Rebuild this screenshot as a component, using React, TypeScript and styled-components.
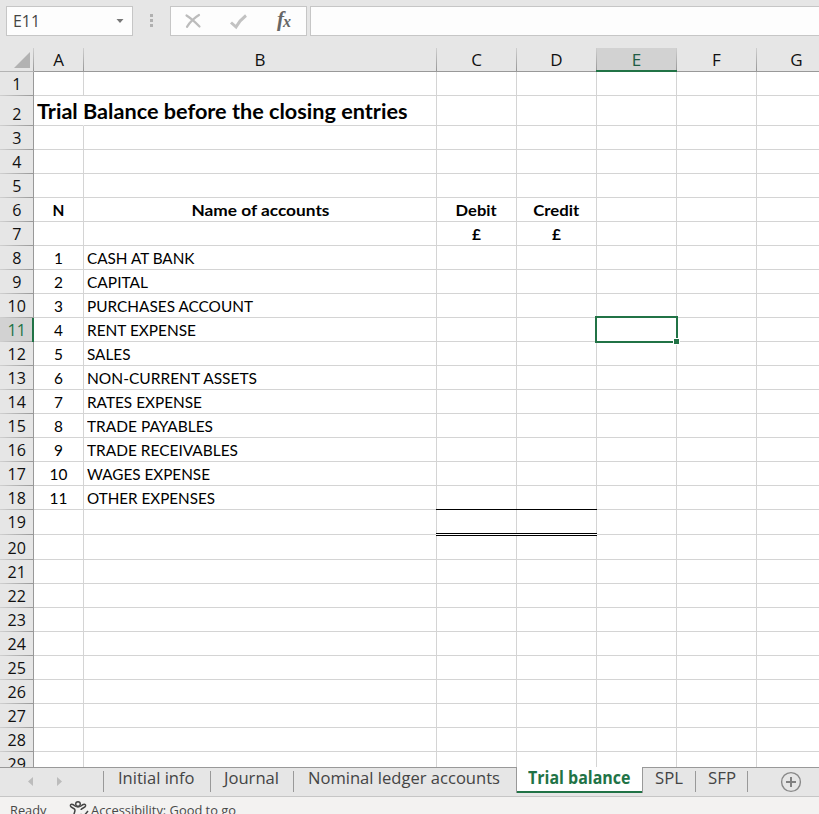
import React, { useLayoutEffect, useRef } from "react";
import styled, { createGlobalStyle, css } from "styled-components";

const GlobalStyle = createGlobalStyle`
  *, *::before, *::after { box-sizing: border-box; }
  html, body { margin: 0; padding: 0; overflow: hidden; background: #e6e6e6; }
`;

const UI_FONT = `"Open Sans", "Noto Sans", sans-serif`;
const CELL_FONT = `Lato, "Liberation Sans", sans-serif`;

const Window = styled.div`
  width: 819px;
  height: 814px;
  display: flex;
  flex-direction: column;
  overflow: hidden;
  background: #e6e6e6;
  font-family: ${UI_FONT};
  color: #000;
`;

const FittedText = styled.span`
  display: inline-block;
  flex: none;
  white-space: pre;
`;

/* Text stretched horizontally so that it takes a given width. */
function Fit({ w, origin = "left", children }: { w: number; origin?: "left" | "center"; children: string }) {
  const ref = useRef<HTMLSpanElement>(null);
  useLayoutEffect(() => {
    const el = ref.current;
    if (!el) return;
    el.style.transform = "none";
    const natural = el.getBoundingClientRect().width;
    el.style.transformOrigin = `${origin} center`;
    el.style.transform = `scaleX(${w / natural})`;
  }, [w, origin, children]);
  return <FittedText ref={ref}>{children}</FittedText>;
}

/* ---------- formula bar ---------- */

const FormulaBar = styled.div`
  height: 48px;
  flex: none;
  display: flex;
  align-items: flex-start;
  padding: 6px 0 0 6px;
`;

const Box = styled.div`
  height: 30px;
  border: 1px solid #c6c6c6;
  background: #fdfdfd;
  display: flex;
  align-items: center;
  flex: none;
`;

const NameBox = styled(Box)`
  width: 127px;
  padding: 0 8px 1px 6px;
  justify-content: space-between;
  font-size: 15.5px;
  color: #444;
`;

const Grip = styled.div`
  width: 37px;
  height: 30px;
  display: flex;
  flex-direction: column;
  align-items: center;
  justify-content: center;
  gap: 2px;
  padding-bottom: 1px;
`;

const GripDot = styled.i`
  width: 3px;
  height: 3px;
  background: #b0b0b0;
`;

const ActionsBox = styled(Box)`
  width: 137px;
  margin-right: 3px;
`;

const FunctionLabel = styled.text`
  font-family: "Liberation Serif", serif;
  font-style: italic;
  font-weight: 700;
  fill: #666;
`;

const FormulaInput = styled(Box)`
  flex: 1;
  border-right: 0;
`;

/* ---------- grid ---------- */

const Sheet = styled.div`
  height: 719px;
  flex: none;
  overflow: hidden;
  background: #fff;
`;

const Row = styled.div<{ $h: number }>`
  display: grid;
  grid-template-columns: 34px 50px 353px 80px 80px 80px 80px 80px;
  height: ${(p) => p.$h}px;
  width: 837px;
`;

const ColumnHead = styled.div<{ $active?: boolean }>`
  position: relative;
  display: flex;
  justify-content: center;
  padding: 1px 1px 0 0;
  font-size: 17px;
  line-height: 22px;
  color: ${(p) => (p.$active ? "#215c44" : "#111")};
  background:
    linear-gradient(to bottom, #cfcfcf, #979797) right / 1px 100% no-repeat,
    ${(p) => (p.$active ? "#d2d2d2" : "#e6e6e6")};
  border-bottom: 1px solid #999;
  ${(p) =>
    p.$active &&
    css`
      &::after {
        content: "";
        position: absolute;
        left: -1px;
        right: 0;
        bottom: -1px;
        height: 2px;
        background: #217346;
      }
    `}
`;

const Corner = styled(ColumnHead)`
  justify-content: flex-end;
  padding: 4px 4px 0 0;
  border-bottom-color: #b4b4b4;
`;

const RowHead = styled.div<{ $active?: boolean; $lift: number }>`
  display: flex;
  align-items: flex-end;
  justify-content: center;
  font-size: 17px;
  line-height: 23px;
  overflow: hidden;
  color: ${(p) => (p.$active ? "#217346" : "#111")};
  background:
    linear-gradient(to right, #d0d0d0, #999) bottom / 100% 1px no-repeat,
    ${(p) => (p.$active ? "#d2d2d2" : "#e6e6e6")};
  border-right: ${(p) => (p.$active ? "2px solid #217346" : "1px solid #999")};
  padding: 0 0 ${(p) => p.$lift}px ${(p) => (p.$active ? 2 : 1)}px;
`;

const Cell = styled.div<{ $align?: "left" | "center"; $bold?: boolean; $title?: boolean; $raised?: boolean }>`
  position: relative;
  display: flex;
  align-items: flex-end;
  justify-content: ${(p) => (p.$align === "center" ? "center" : "flex-start")};
  padding: 0 0 1px ${(p) => (p.$align === "center" ? 0 : 3)}px;
  border-right: 1px solid ${(p) => (p.$title ? "transparent" : "#d4d4d4")};
  border-bottom: 1px solid #d4d4d4;
  font-family: ${CELL_FONT};
  font-size: ${(p) => (p.$title ? 20 : 15.4)}px;
  font-weight: ${(p) => (p.$bold ? 700 : 400)};
  line-height: ${(p) => (p.$title ? 25 : 20)}px;
  white-space: nowrap;
  min-width: 0;
  z-index: ${(p) => (p.$title || p.$raised ? 1 : 0)};
`;

const Selection = styled.div`
  position: absolute;
  inset: -2px;
  border: 2px solid #217346;
  &::after {
    content: "";
    position: absolute;
    right: -4px;
    bottom: -4px;
    width: 7px;
    height: 7px;
    border: 1px solid #fff;
    background: #217346;
  }
`;

const TotalRule = styled.div`
  position: absolute;
  left: -1px;
  right: -1px;
  top: -1px;
  bottom: -2px;
  border-top: 1px solid #000;
  &::after {
    content: "";
    position: absolute;
    left: 0;
    right: 0;
    bottom: 0;
    height: 3px;
    border: solid #000;
    border-width: 1px 0;
    background: #fff;
  }
`;

/* ---------- sheet tabs ---------- */

const TabBar = styled.div`
  height: 30px;
  flex: none;
  display: flex;
  border-bottom: 1px solid #c6c6c6;
  font-size: 17px;
  line-height: 20px;
  color: #444;
`;

const TabNav = styled.div`
  width: 103px;
  border-top: 1px solid #999;
  padding: 9px 0 0 27px;
`;

const Tab = styled.div<{ $w: number; $pad: number; $divider?: boolean }>`
  width: ${(p) => p.$w}px;
  padding-left: ${(p) => p.$pad}px;
  border-top: 1px solid #999;
  flex: none;
  background: ${(p) =>
    p.$divider ? "linear-gradient(#999, #999) left 3px / 1px 21px no-repeat" : "none"};
`;

const ActiveTab = styled.div`
  width: 127px;
  height: 26px;
  padding: 1px 0 0 11px;
  border-left: 1px solid #999;
  border-right: 1px solid #999;
  background: #fff;
  box-shadow: inset 0 -2px 0 #217346;
  color: #217346;
  font-weight: 700;
  flex: none;
`;

const AddArea = styled.div`
  flex: 1;
  border-top: 1px solid #999;
  padding: 4px 0 0 32px;
  background: linear-gradient(#999, #999) left 3px / 1px 21px no-repeat;
`;

const StatusBar = styled.div`
  height: 17px;
  flex: none;
  display: flex;
  background: #f3f2f1;
  overflow: hidden;
  color: #484848;
  font-size: 13px;
  line-height: 18px;
`;

const StatusItem = styled.div<{ $w: number; $pad: number; $top: number }>`
  width: ${(p) => p.$w}px;
  padding: ${(p) => p.$top}px 0 0 ${(p) => p.$pad}px;
  flex: none;
`;

const Icon = styled.svg`
  display: block;
  flex: none;
  overflow: visible;
`;

const accounts: [string, number][] = [
  ["CASH AT BANK", 107.5],
  ["CAPITAL", 61],
  ["PURCHASES ACCOUNT", 166],
  ["RENT EXPENSE", 109],
  ["SALES", 43.5],
  ["NON-CURRENT ASSETS", 170],
  ["RATES EXPENSE", 115],
  ["TRADE PAYABLES", 126],
  ["TRADE RECEIVABLES", 151],
  ["WAGES EXPENSE", 123],
  ["OTHER EXPENSES", 128],
];

const columns = ["A", "B", "C", "D", "E", "F", "G"];

const rowHeight = (n: number) => (n === 2 ? 30 : n === 19 || n === 20 ? 25 : 24);

function cellText(row: number, col: string) {
  if (row === 6) {
    if (col === "A") return <>N</>;
    if (col === "B") return <Fit w={138} origin="center">Name of accounts</Fit>;
    if (col === "C") return <Fit w={41} origin="center">Debit</Fit>;
    if (col === "D") return <Fit w={46} origin="center">Credit</Fit>;
  }
  if (row === 7 && (col === "C" || col === "D")) return <>£</>;
  if (row >= 8 && row <= 18) {
    if (col === "A") return <>{row - 7}</>;
    if (col === "B") {
      const [name, w] = accounts[row - 8];
      return <Fit w={w}>{name}</Fit>;
    }
  }
  return null;
}

function SheetRow({ n }: { n: number }) {
  return (
    <Row $h={rowHeight(n)}>
      <RowHead $active={n === 11} $lift={n === 19 ? 2 : 1}>
        <Fit w={n < 10 ? 9.2 : 18.4} origin="center">{String(n)}</Fit>
      </RowHead>
      {columns.map((c) => {
        if (n === 2 && c === "A") {
          return (
            <Cell key={c} $title $bold>
              <Fit w={370.5}>Trial Balance before the closing entries</Fit>
            </Cell>
          );
        }
        const centered = c !== "B" || n < 8;
        const selected = n === 11 && c === "E";
        const total = n === 19 && (c === "C" || c === "D");
        return (
          <Cell key={c} $align={centered ? "center" : "left"} $bold={n < 8} $raised={selected || total}>
            {cellText(n, c)}
            {selected && <Selection />}
            {total && <TotalRule />}
          </Cell>
        );
      })}
    </Row>
  );
}

export default function App() {
  return (
    <>
      <GlobalStyle />
      <Window>
        <FormulaBar>
          <NameBox>
            <Fit w={27}>E11</Fit>
            <Icon width="8" height="4" viewBox="0 0 8 4">
              <path d="M0.500 0h7L4 4z" fill="#777" />
            </Icon>
          </NameBox>
          <Grip>
            <GripDot />
            <GripDot />
            <GripDot />
          </Grip>
          <ActionsBox>
            <Icon width="135" height="28" viewBox="171 7 135 28">
              <path d="M186.500 15.500C190 17.500 195 22 199.500 26.500M199 15C194 18 190 22 187 26.800" fill="none" stroke="#bcbcbc" strokeWidth="2.200" strokeLinecap="round" />
              <path d="M231 22.500L236 27Q240 20 246 15.500" fill="none" stroke="#c2c2c2" strokeWidth="3" />
              <FunctionLabel x="277" y="26" fontSize="21">f</FunctionLabel>
              <FunctionLabel x="283" y="27" fontSize="16">x</FunctionLabel>
            </Icon>
          </ActionsBox>
          <FormulaInput />
        </FormulaBar>

        <Sheet>
          <Row $h={24}>
            <Corner>
              <Icon width="16" height="16" viewBox="0 0 16 16">
                <path d="M16 0v16H0z" fill="#b2b2b2" />
              </Icon>
            </Corner>
            {columns.map((c) => (
              <ColumnHead key={c} $active={c === "E"}>{c}</ColumnHead>
            ))}
          </Row>
          {Array.from({ length: 29 }, (_, i) => (
            <SheetRow key={i} n={i + 1} />
          ))}
        </Sheet>

        <TabBar>
          <TabNav>
            <Icon width="36" height="9" viewBox="0 0 36 9">
              <path d="M6 0v9L1 4.500zM30 0v9l5-4.500z" fill="#bcbcbc" />
            </Icon>
          </TabNav>
          <Tab $w={107} $pad={15} $divider><Fit w={76.5}>Initial info</Fit></Tab>
          <Tab $w={83} $pad={14} $divider><Fit w={55}>Journal</Fit></Tab>
          <Tab $w={223} $pad={15} $divider><Fit w={192}>Nominal ledger accounts</Fit></Tab>
          <ActiveTab><Fit w={102.5}>Trial balance</Fit></ActiveTab>
          <Tab $w={52} $pad={12} $divider={false}><Fit w={28}>SPL</Fit></Tab>
          <Tab $w={52} $pad={12.5} $divider><Fit w={28}>SFP</Fit></Tab>
          <AddArea>
            <Icon width="22" height="22" viewBox="0 0 22 22">
              <circle cx="12" cy="10" r="9.400" fill="none" stroke="#888" strokeWidth="1.400" />
              <path d="M12 5v10M7 10h10" stroke="#808080" strokeWidth="2" />
            </Icon>
          </AddArea>
        </TabBar>

        <StatusBar>
          <StatusItem $w={69} $pad={10} $top={4}><Fit w={36.5}>Ready</Fit></StatusItem>
          <StatusItem $w={22} $pad={0} $top={5}>
            <Icon width="20" height="16" viewBox="69 802 20 16">
              <circle cx="78" cy="804" r="2.300" fill="none" stroke="#444" strokeWidth="1.400" />
              <path d="M75 806C73 804 70 803.500 70.500 806C71 808 75 808 75 810C75 813 73 815 73 818M81 806C83 804 86 803.500 85.500 806C85 808 81 808 81 810M75 806Q78 808 81 806M80.500 814l2.500 3 5-6" fill="none" stroke="#444" strokeWidth="1.500" />
            </Icon>
          </StatusItem>
          <StatusItem $w={160} $pad={0} $top={4}><Fit w={145}>Accessibility: Good to go</Fit></StatusItem>
        </StatusBar>
      </Window>
    </>
  );
}
